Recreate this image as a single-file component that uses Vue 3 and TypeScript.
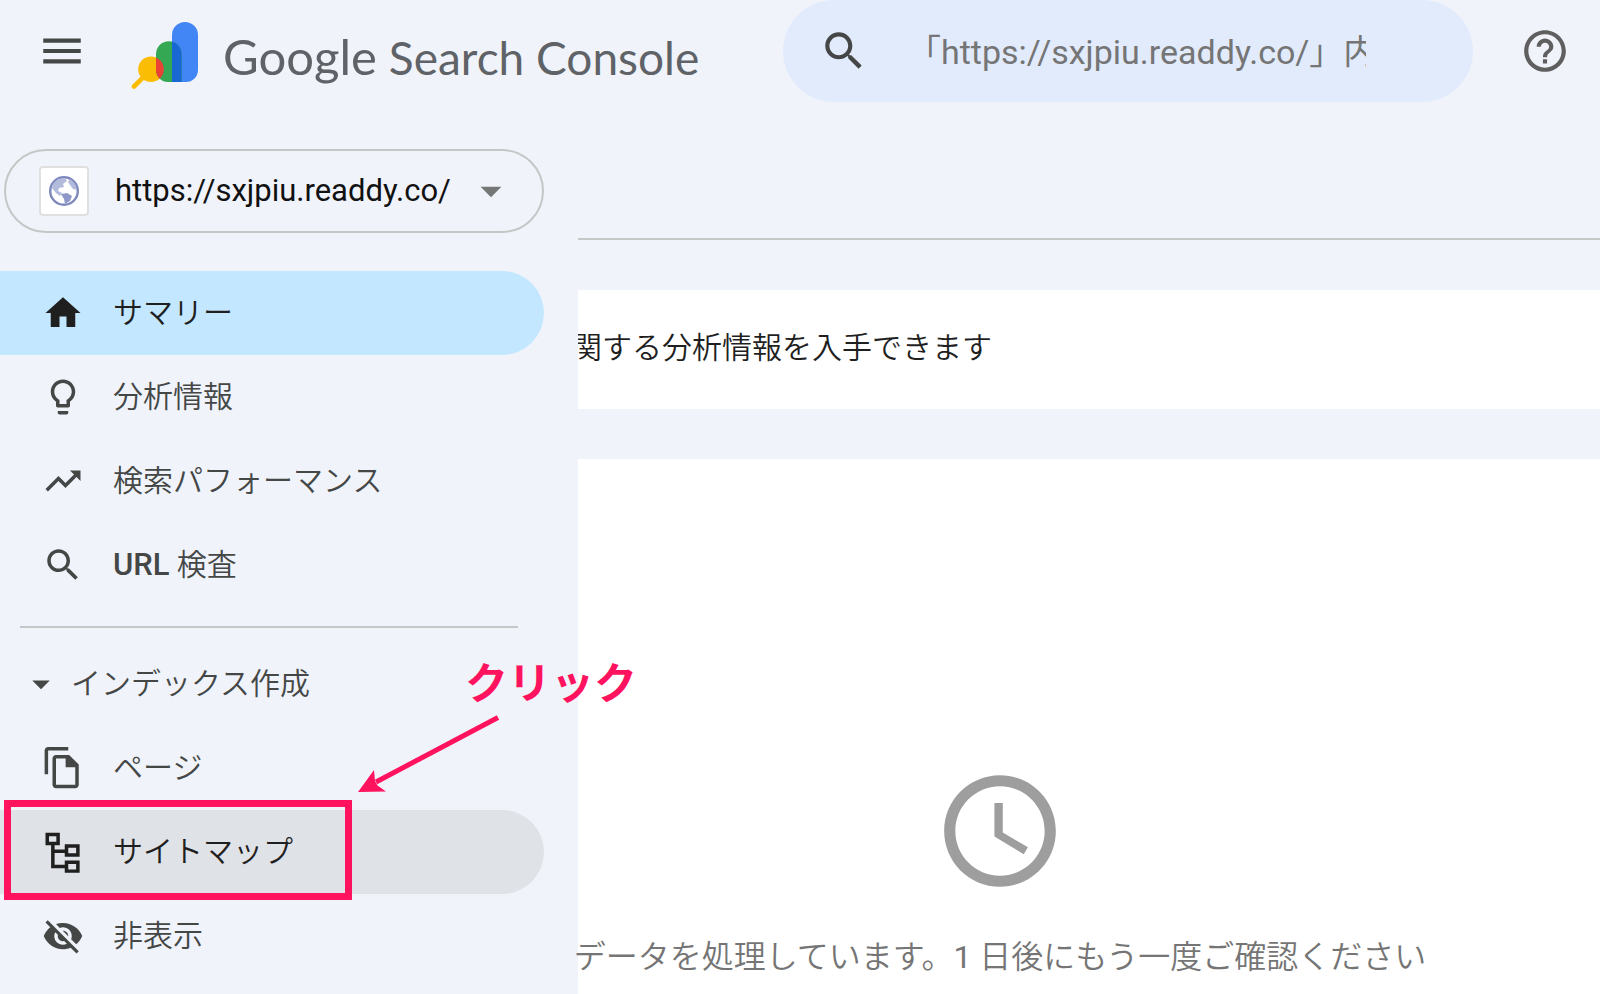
<script setup lang="ts">
import { ref } from 'vue'

interface NavItem {
  latin?: string
  label: string
  icon: string
  state?: 'active' | 'hover'
}

const query = ref('「https://sxjpiu.readdy.co/」内')

const paths: Record<string, string> = {
  home: 'M10 20v-6h4v6h5v-8h3L12 3 2 12h3v8z',
  bulb: 'M9 20h6v1c0 .55-.45 1-1 1h-4c-.55 0-1-.45-1-1zM12 2C8.14 2 5 5.14 5 9c0 2.38 1.19 4.47 3 5.74V17c0 .55.45 1 1 1h6c.55 0 1-.45 1-1v-2.26c1.81-1.27 3-3.36 3-5.74 0-3.86-3.14-7-7-7zm2.85 11.1l-.85.6V16h-4v-2.3l-.85-.6C7.8 12.16 7 10.63 7 9c0-2.76 2.24-5 5-5s5 2.24 5 5c0 1.63-.8 3.16-2.15 4.1z',
  trend: 'M16 6l2.29 2.29-4.88 4.88-4-4L2 16.59 3.41 18l6-6 4 4 6.3-6.29L22 12V6z',
  search:
    'M15.5 14h-.79l-.28-.27C15.41 12.59 16 11.11 16 9.5 16 5.91 13.09 3 9.5 3S3 5.91 3 9.5 5.91 16 9.5 16c1.61 0 3.09-.59 4.23-1.57l.27.28v.79l5 4.99L20.49 19l-4.99-5zm-6 0C7.01 14 5 11.99 5 9.5S7.01 5 9.5 5 14 7.01 14 9.5 11.99 14 9.5 14z',
  pages:
    'M3.5 0H15v2H3.5v13.5h-2V2c0-1.1.9-2 2-2zM8 4.5h7.500l5.500 5.500v11.500c0 1.100-.9 2-2 2H8c-1.100 0-2-.9-2-2V6.500c0-1.100.9-2 2-2zM8 6.500v15h11V11.500h-5.500V6.500z',
  sitemap:
    'M2 1h8.200v7.200H7.200v2.300H13V7.500h8.500v7.200H13v-2.200H7.200v6.800H13v-2.500h8.500v7H13v-2.500H5.200V8.200H2zM4 3v3.200h4.200V3zM15 9.500v3.200h4.500V9.500zM15 18.800V22h4.500v-3.200z',
  hidden:
    'M12 7c2.760 0 5 2.240 5 5 0 .65-.13 1.260-.36 1.830l2.920 2.920c1.510-1.260 2.700-2.890 3.430-4.750-1.730-4.390-6-7.500-11-7.500-1.400 0-2.740.25-3.980.7l2.160 2.160C10.740 7.130 11.350 7 12 7zM2 4.270l2.280 2.280.46.46C3.080 8.300 1.780 10.020 1 12c1.730 4.390 6 7.500 11 7.500 1.550 0 3.030-.3 4.380-.84l.42.42L19.730 22 21 20.730 3.270 3 2 4.270zM7.530 9.800l1.550 1.550c-.05.21-.08.43-.08.65 0 1.660 1.340 3 3 3 .22 0 .44-.03.65-.08l1.550 1.550c-.67.33-1.410.53-2.200.53-2.760 0-5-2.240-5-5 0-.79.2-1.530.53-2.200zm4.310-.78l3.150 3.150.02-.16c0-1.660-1.340-3-3-3l-.17.01z',
}

const mainItems: NavItem[] = [
  { label: 'サマリー', icon: 'home', state: 'active' },
  { label: '分析情報', icon: 'bulb' },
  { label: '検索パフォーマンス', icon: 'trend' },
  { latin: 'URL', label: ' 検査', icon: 'search' },
]

const indexItems: NavItem[] = [
  { label: 'ページ', icon: 'pages' },
  { label: 'サイトマップ', icon: 'sitemap', state: 'hover' },
  { label: '非表示', icon: 'hidden' },
]
</script>

<template>
  <div class="app">
    <header class="header">
      <div class="brand-area">
        <button class="icon-button" type="button" aria-label="メニュー">
          <svg class="icon-lg" viewBox="0 0 24 24"><path d="M3 18h18v-2H3v2zm0-5h18v-2H3v2zm0-7v2h18V6H3z" /></svg>
        </button>
        <a class="brand" href="#">
          <svg class="logo" viewBox="0 0 68 68" aria-hidden="true">
            <defs>
              <clipPath id="greenShape">
                <path d="M25 33a12.800 12.800 0 0 1 25.600 0V61H37a12 12 0 0 1-12-12z" />
              </clipPath>
            </defs>
            <path d="M3 65.500L14 54.500" stroke="#fbbc04" stroke-width="4.600" stroke-linecap="round" />
            <circle cx="20" cy="48.300" r="12.800" fill="#fbbc04" />
            <path d="M41 14a13 13 0 0 1 26 0V49a12 12 0 0 1-12 12H41z" fill="#4285f4" />
            <path d="M25 33a12.800 12.800 0 0 1 25.600 0V61H37a12 12 0 0 1-12-12z" fill="#34a853" />
            <g clip-path="url(#greenShape)">
              <path d="M41 0h20v61H41z" fill="#1967d2" />
              <circle cx="20" cy="48.300" r="12.800" fill="#ea4335" />
            </g>
          </svg>
          <span class="wordmark"><span class="google">Google</span><span class="product">Search Console</span></span>
        </a>
      </div>
      <form class="search" role="search" @submit.prevent>
        <button class="icon-button" type="submit" aria-label="検索">
          <svg class="icon-lg" viewBox="0 0 24 24"><path :d="paths.search" /></svg>
        </button>
        <input v-model="query" class="search-input" type="text" aria-label="URL を検査" />
      </form>
      <button class="icon-button help" type="button" aria-label="ヘルプ">
        <svg class="icon-lg" viewBox="0 0 24 24">
          <path d="M11 18h2v-2h-2v2zm1-16C6.480 2 2 6.480 2 12s4.480 10 10 10 10-4.480 10-10S17.520 2 12 2zm0 18c-4.410 0-8-3.590-8-8s3.590-8 8-8 8 3.590 8 8-3.590 8-8 8zm0-14c-2.210 0-4 1.790-4 4h2c0-1.100.9-2 2-2s2 .9 2 2c0 2-3 1.750-3 5h2c0-2.250 3-2.500 3-5 0-2.210-1.790-4-4-4z" />
        </svg>
      </button>
    </header>

    <div class="body">
      <aside class="sidebar">
        <button class="property" type="button">
          <span class="favicon">
            <svg viewBox="0 0 32 32" aria-hidden="true">
              <circle cx="16" cy="16" r="13.800" fill="#fff" stroke="#7d88bd" stroke-width="2.400" />
              <path d="M5 9l5-5 7-1 2 3-4 3 1 3-5 1-1 3 4 2-2 3-4-3-4-5z" fill="#b3bbdc" />
              <path d="M22 4l5 5 2 6-4-1-3-4-2-3z" fill="#b3bbdc" />
              <path d="M13 19l6-1 5 3-2 5-5 3-1-5z" fill="#8d97c8" />
            </svg>
          </span>
          <span class="property-name">https://sxjpiu.readdy.co/</span>
          <svg class="icon-lg caret" viewBox="0 0 24 24"><path d="M7 10l5 5 5-5z" /></svg>
        </button>

        <nav class="nav">
          <a v-for="item in mainItems" :key="item.label" href="#" class="nav-item" :class="item.state">
            <svg class="icon" viewBox="0 0 24 24"><path :d="paths[item.icon]" /></svg>
            <span class="nav-label"><span v-if="item.latin" class="latin">{{ item.latin }}</span>{{ item.label }}</span>
          </a>
          <hr class="nav-rule" />
          <button class="nav-section" type="button" aria-expanded="true">
            <svg class="icon" viewBox="0 0 24 24"><path d="M7 10l5 5 5-5z" /></svg>
            <span class="nav-label">インデックス作成</span>
          </button>
          <a v-for="item in indexItems" :key="item.label" href="#" class="nav-item" :class="item.state">
            <svg class="icon" viewBox="0 0 24 24"><path fill-rule="evenodd" :d="paths[item.icon]" /></svg>
            <span class="nav-label">{{ item.label }}</span>
            <span v-if="item.state === 'hover'" class="marker"></span>
          </a>
        </nav>

        <div class="callout">
          <span class="callout-text">クリック</span>
          <svg class="callout-arrow" viewBox="0 0 144 80" aria-hidden="true">
            <path d="M19 68L141 3.500" stroke="#ff135f" stroke-width="5" />
            <path d="M1 78L17 56l1 11 2.500 4.500L29 77.500z" fill="#ff135f" />
          </svg>
        </div>
      </aside>

      <main class="main">
        <section class="banner"><p>関する分析情報を入手できます</p></section>
        <section class="status">
          <svg class="clock" viewBox="0 0 24 24" aria-hidden="true">
            <path d="M11.990 2C6.470 2 2 6.480 2 12s4.470 10 9.990 10C17.520 22 22 17.520 22 12S17.520 2 11.990 2zM12 20c-4.420 0-8-3.580-8-8s3.580-8 8-8 8 3.580 8 8-3.580 8-8 8zm.5-13H11v6l5.250 3.150.75-1.230-4.500-2.670z" />
          </svg>
          <p>データを処理しています。<span class="count">1</span> 日後にもう一度ご確認ください</p>
        </section>
      </main>
    </div>
  </div>
</template>

<style>
body {
  margin: 0;
  background: #f0f3fa;
}
</style>

<style scoped>
.app {
  display: flex;
  flex-direction: column;
  min-height: 100vh;
  overflow: hidden;
  background: #f0f3fa;
  color: #444746;
  font-family: Roboto, "Noto Sans CJK JP", sans-serif;
  font-size: 30px;
  line-height: 40px;
}

button {
  padding: 0;
  border: 0;
  background: none;
  color: inherit;
  font: inherit;
  cursor: pointer;
}

a {
  color: inherit;
  text-decoration: none;
}

p {
  margin: 0;
  white-space: nowrap;
}

svg {
  display: block;
  flex: none;
  fill: currentColor;
}

.icon {
  width: 42px;
  height: 42px;
}

.icon-lg {
  width: 50px;
  height: 50px;
}

.header {
  display: grid;
  grid-template-columns: 783px 1fr 127px;
  align-items: center;
  height: 102px;
}

.brand-area {
  display: flex;
  align-items: center;
  gap: 44px;
  padding-left: 37px;
}

.brand {
  display: flex;
  align-items: center;
  gap: 24px;
  padding-top: 8px;
  color: #5f6368;
}

.logo {
  width: 68px;
  height: 68px;
}

.wordmark {
  display: flex;
  align-items: baseline;
  gap: 12px;
  padding-top: 4px;
  font-family: Lato, sans-serif;
  font-size: 46px;
  line-height: 60px;
  white-space: nowrap;
}

.google {
  font-size: 49px;
}

.search {
  display: flex;
  align-items: center;
  gap: 38px;
  height: 102px;
  padding: 0 107px 0 36px;
  box-sizing: border-box;
  border-radius: 51px;
  background: #e2ebfc;
}

.search-input {
  flex: 1;
  min-width: 0;
  padding: 2px 0 0;
  border: 0;
  outline: 0;
  background: none;
  color: #757575;
  font: 400 34px/48px Roboto, "Noto Sans CJK JP", sans-serif;
}

.help {
  justify-self: end;
  margin-right: 30px;
  color: #5f5f5f;
}

.body {
  display: grid;
  grid-template-columns: 578px 1fr;
  flex: 1;
}

.sidebar {
  position: relative;
  padding-top: 47px;
}

.property {
  display: flex;
  align-items: center;
  width: 540px;
  height: 84px;
  margin-left: 4px;
  padding: 0 26px 0 33px;
  box-sizing: border-box;
  border: 2px solid #c4c7c5;
  border-radius: 42px;
  color: #1f1f1f;
}

.favicon {
  display: flex;
  align-items: center;
  justify-content: center;
  width: 50px;
  height: 50px;
  box-sizing: border-box;
  border: 2px solid #e0e0e0;
  border-radius: 4px;
  background: #fff;
}

.favicon svg {
  width: 32px;
  height: 32px;
}

.property-name {
  flex: 1;
  margin-left: 26px;
  color: #111;
  font-size: 31px;
  font-weight: 450;
  text-align: left;
}

.caret {
  color: #747775;
}

.nav {
  margin-top: 38px;
}

.nav-item {
  position: relative;
  display: flex;
  align-items: center;
  gap: 29px;
  width: 544px;
  height: 84px;
  padding-left: 42px;
  box-sizing: border-box;
  border-radius: 0 42px 42px 0;
}

.nav-label {
  font-weight: 350;
  white-space: pre;
}

.latin {
  font-size: 31px;
  font-weight: 500;
}

.active {
  background: #c2e7ff;
  color: #1f1f1f;
}

.hover {
  background: #dfe2e6;
  color: #1f1f1f;
}

.nav-rule {
  width: 498px;
  height: 2px;
  margin: 19px 0 14px 20px;
  border: 0;
  background: #c4c7c5;
}

.nav-section {
  display: flex;
  align-items: center;
  gap: 9px;
  width: 544px;
  height: 84px;
  padding-left: 20px;
}

.marker {
  position: absolute;
  top: -10px;
  left: 4px;
  width: 348px;
  height: 100px;
  box-sizing: border-box;
  border: 7px solid #ff135f;
}

.callout {
  position: absolute;
  top: 552px;
  left: 357px;
  color: #ff135f;
}

.callout-text {
  display: block;
  margin-left: 108px;
  font-size: 43px;
  font-weight: 700;
  line-height: 60px;
  white-space: nowrap;
}

.callout-arrow {
  width: 144px;
  height: 80px;
}

.main {
  display: flex;
  flex-direction: column;
  gap: 50px;
  min-width: 0;
  margin-top: 136px;
  padding-top: 50px;
  border-top: 2px solid #c4c7c5;
}

.banner {
  display: flex;
  align-items: center;
  height: 119px;
  overflow: hidden;
  background: #fff;
  color: #1f1f1f;
  font-weight: 350;
}

.banner p {
  margin-left: -6px;
  padding-bottom: 4px;
}

.status {
  display: flex;
  flex: 1;
  flex-direction: column;
  align-items: center;
  gap: 39px;
  padding: 305px 178px 0 0;
  background: #fff;
  color: #757575;
  font-size: 32px;
  font-weight: 350;
}

.count {
  font-weight: 400;
}

.clock {
  width: 134px;
  height: 134px;
  color: #9e9e9e;
}
</style>
